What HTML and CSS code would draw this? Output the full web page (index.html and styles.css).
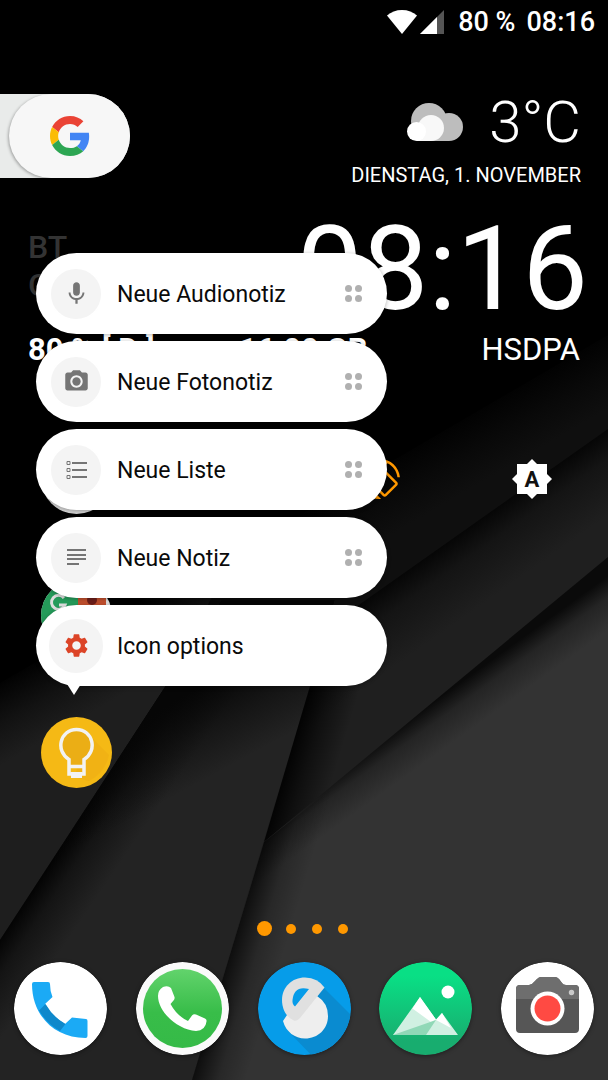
FILE: index.html
```html
<!DOCTYPE html>
<html lang="de">
<head>
  <meta charset="UTF-8">
  <meta name="viewport" content="width=device-width, initial-scale=1">
  <title>Startbildschirm</title>
  <link rel="stylesheet" href="styles.css">
</head>
<body>
  <div class="phone">
    <!-- wallpaper -->
    <svg class="wallpaper" viewBox="0 0 608 1080" preserveAspectRatio="none" aria-hidden="true">
      <defs>
        <linearGradient id="sheet1" gradientUnits="userSpaceOnUse" x1="304" y1="512" x2="336" y2="567">
          <stop offset="0" stop-color="#020202"/><stop offset="0.5" stop-color="#090909"/><stop offset="1" stop-color="#0f0f0f"/>
        </linearGradient>
        <linearGradient id="sheet2" gradientUnits="userSpaceOnUse" x1="486" y1="515" x2="527" y2="573">
          <stop offset="0" stop-color="#060606"/><stop offset="0.35" stop-color="#141414"/><stop offset="1" stop-color="#1f1f1f"/>
        </linearGradient>
        <linearGradient id="left1" gradientUnits="userSpaceOnUse" x1="50" y1="654" x2="86" y2="716">
          <stop offset="0" stop-color="#020202"/><stop offset="0.5" stop-color="#121212"/><stop offset="1" stop-color="#1e1e1e"/>
        </linearGradient>
        <linearGradient id="left2" gradientUnits="userSpaceOnUse" x1="82" y1="812" x2="132" y2="846">
          <stop offset="0" stop-color="#010101"/><stop offset="0.4" stop-color="#141414"/><stop offset="1" stop-color="#232323"/>
        </linearGradient>
        <linearGradient id="left2top" gradientUnits="userSpaceOnUse" x1="250" y1="660" x2="290" y2="734">
          <stop offset="0" stop-color="#060606"/><stop offset="0.5" stop-color="#080808" stop-opacity="0.5"/><stop offset="1" stop-color="#080808" stop-opacity="0"/>
        </linearGradient>
        <linearGradient id="edge" gradientUnits="userSpaceOnUse" x1="284" y1="775" x2="330" y2="789">
          <stop offset="0" stop-color="#000" stop-opacity="0.9"/><stop offset="0.4" stop-color="#000" stop-opacity="0.5"/><stop offset="1" stop-color="#000" stop-opacity="0"/>
        </linearGradient>
        <linearGradient id="edge2" gradientUnits="userSpaceOnUse" x1="235" y1="935" x2="285" y2="950">
          <stop offset="0" stop-color="#000" stop-opacity="0.75"/><stop offset="0.5" stop-color="#000" stop-opacity="0.22"/><stop offset="1" stop-color="#000" stop-opacity="0"/>
        </linearGradient>
        <linearGradient id="sheet3" gradientUnits="userSpaceOnUse" x1="436" y1="700" x2="462" y2="736">
          <stop offset="0" stop-color="#0a0a0a"/><stop offset="0.4" stop-color="#242424"/><stop offset="1" stop-color="#333"/>
        </linearGradient>
      </defs>
      <rect width="608" height="1080" fill="#000"/>
      <path d="M608 335 0 690V1080H608z" fill="url(#sheet1)"/>
      <path d="M608 429 200 717V1080H608z" fill="url(#sheet2)"/>
      <path d="M0 683 240 543 165 687 0 940z" fill="url(#left1)"/>
      <path d="M222 600 165 687 0 940V1080H192L310 686 335 600z" fill="url(#left2)"/>
      <path d="M222 600 165 687 0 940H236L310 686 335 600z" fill="url(#left2top)"/>
      <path d="M310 686 264 842 450 690 440 640 324 640z" fill="url(#edge)"/>
      <path d="M608 557 264 842 192 1080H608z" fill="url(#sheet3)"/>
      <path d="M264 842 192 1080H330V790z" fill="url(#edge2)"/>
    </svg>

    <header class="status-bar">
      <svg class="wifi" viewBox="0 0 30 24"><path d="M15 24 0 5.500C4 2 9 0 15 0s11 2 15 5.500z" fill="#fff"/></svg>
      <svg class="signal" viewBox="0 0 24 24"><path d="M0 24 24 0v24z" fill="#555"/><path d="M0 24 17 7v17z" fill="#fff"/></svg>
      <span class="battery">80 %</span>
      <span>08:16</span>
    </header>

    <div class="top-row">
      <button class="search-pill" aria-label="Google Suche">
        <span class="pill-front">
          <svg viewBox="0 0 48 48">
            <path fill="#ea4335" d="M24 9.500c3.540 0 6.710 1.220 9.210 3.600l6.850-6.850C35.900 2.380 30.470 0 24 0 14.620 0 6.510 5.380 2.560 13.220l7.980 6.190C12.430 13.720 17.740 9.500 24 9.500z"/>
            <path fill="#4285f4" d="M46.980 24.550c0-1.570-.15-3.090-.38-4.550H24v9.020h12.940c-.58 2.960-2.260 5.480-4.780 7.180l7.730 6c4.510-4.180 7.090-10.360 7.090-17.650z"/>
            <path fill="#fbbc05" d="M10.530 28.590c-.48-1.450-.76-2.990-.76-4.590s.27-3.140.76-4.590l-7.980-6.190C.92 16.460 0 20.120 0 24s.92 7.540 2.560 10.780z"/>
            <path fill="#2da653" d="M24 48c6.480 0 11.930-2.130 15.890-5.810l-7.730-6c-2.150 1.450-4.920 2.300-8.160 2.300-6.260 0-11.570-4.220-13.470-9.910l-7.980 6.190C6.510 42.620 14.620 48 24 48z"/>
          </svg>
        </span>
      </button>
      <div class="weather">
        <div class="temp-line">
          <svg class="cloud" viewBox="0 0 56 38">
            <circle cx="22" cy="18" r="18" fill="#bdbdbd"/>
            <circle cx="42" cy="24" r="14" fill="#bdbdbd"/>
            <path d="M22 30h20v8H22z" fill="#bdbdbd"/>
            <circle cx="24" cy="25" r="13" fill="#f8f8f8"/>
            <path d="M10 30h14v8H10z" fill="#f8f8f8"/>
            <circle cx="9.500" cy="28.500" r="9.500" fill="#fff"/>
          </svg>
          <span class="temp">3°C</span>
        </div>
        <div class="date">DIENSTAG, 1. NOVEMBER</div>
      </div>
    </div>

    <div class="clock-row">
      <div class="toggles"><span>BT</span><span>GPS</span></div>
      <time class="clock">08:16</time>
    </div>
    <div class="info-row">
      <strong>80 % [ D ]</strong>
      <strong class="storage">16.00 GB</strong>
      <span class="network">HSDPA</span>
    </div>

    <main class="app-grid">
      <button class="app" aria-label="App"><svg viewBox="0 0 71 71"><circle cx="35.500" cy="35.500" r="35.500" fill="#d5d5d5"/></svg></button>
      <span></span>
      <button class="app" aria-label="Drehen">
        <svg class="glyph" viewBox="0 0 24 24"><path fill="#ff9800" d="M16.480 2.520c3.270 1.550 5.610 4.720 5.970 8.480h1.500C23.440 4.840 18.290 0 12 0l-.66.03 3.810 3.810 1.330-1.320zm-6.250-.77c-.59-.59-1.540-.59-2.120 0L1.750 8.110c-.59.59-.59 1.540 0 2.120l12.020 12.020c.59.59 1.540.59 2.120 0l6.360-6.360c.59-.59.59-1.540 0-2.120L10.230 1.750zm4.600 19.440L2.810 9.170l6.360-6.360 12.020 12.020-6.360 6.360zm-7.310.29C4.250 19.940 1.910 16.760 1.550 13H.05C.56 19.160 5.710 24 12 24l.66-.03-3.810-3.810-1.330 1.320z"/></svg>
      </button>
      <button class="app" aria-label="Automatische Helligkeit">
        <svg class="glyph" viewBox="0 0 40 40">
          <path d="M5 5h30v30H5zM20 0l20 20-20 20L0 20z" fill="#fff"/>
          <text x="20" y="28" text-anchor="middle" class="auto">A</text>
        </svg>
      </button>

      <button class="app" aria-label="Ordner">
        <svg viewBox="0 0 71 71">
          <clipPath id="folder"><circle cx="35.500" cy="35.500" r="35.500"/></clipPath>
          <g clip-path="url(#folder)">
            <path d="M0 0h71v71H0z" fill="#ddd"/>
            <path d="M0 0h37v71H0z" fill="#259b5a"/>
            <path d="M37 0h28v71H37z" fill="#c1502e"/>
            <circle cx="51" cy="20" r="5" fill="#6d1f1a"/>
            <path d="M23 18a7 7 0 1 0 1 7h-6" fill="none" stroke="#ddd" stroke-width="3"/>
          </g>
        </svg>
      </button>
      <span></span><span></span><span></span>

      <button class="app" aria-label="Notizen">
        <svg viewBox="0 0 71 71">
          <circle cx="35.500" cy="35.500" r="35.500" fill="#f5b915"/>
          <path d="M48 18 68 38q-4 18-20 26L33 60z" fill="#edac14" opacity="0.5"/>
          <path d="M28 50V42.500C14 34 19 12.500 35.500 12.500S57 34 43 42.500V50z" fill="#ebae15"/>
          <path d="M28 57V42.500C14 34 19 12.500 35.500 12.500S57 34 43 42.500V57zM28 49.500h15" fill="none" stroke="#f2f2f2" stroke-width="3.500"/>
          <path d="M30 55h11v6H30z" fill="#f2f2f2"/>
        </svg>
      </button>
    </main>

    <!-- long press menu -->
    <div class="shortcuts" role="menu">
      <button class="shortcut" role="menuitem">
        <span class="icon"><svg viewBox="0 0 24 24"><path d="M12 14c1.660 0 2.990-1.340 2.990-3L15 5c0-1.660-1.340-3-3-3S9 3.340 9 5v6c0 1.660 1.340 3 3 3zm5.300-3c0 3-2.540 5.100-5.300 5.100S6.700 14 6.700 11H5c0 3.410 2.720 6.230 6 6.720V21h2v-3.280c3.280-.48 6-3.300 6-6.720h-1.700z"/></svg></span>
        <span class="label">Neue Audionotiz</span>
        <span class="grip"><i></i><i></i><i></i><i></i></span>
      </button>
      <button class="shortcut" role="menuitem">
        <span class="icon"><svg viewBox="0 0 24 24"><circle cx="12" cy="12" r="3.700"/><path d="M9 2 7.170 4H4c-1.100 0-2 .9-2 2v12c0 1.100.9 2 2 2h16c1.100 0 2-.9 2-2V6c0-1.100-.9-2-2-2h-3.170L15 2H9zm3 15.500c-3.040 0-5.500-2.460-5.500-5.500S8.960 6.500 12 6.500s5.500 2.460 5.500 5.500-2.460 5.500-5.500 5.500z"/></svg></span>
        <span class="label">Neue Fotonotiz</span>
        <span class="grip"><i></i><i></i><i></i><i></i></span>
      </button>
      <button class="shortcut" role="menuitem">
        <span class="icon"><svg viewBox="0 0 27 27"><path d="M9 6h15v2H9zM9 13h15v2H9zM9 20h15v2H9z"/><path d="M4 5.500h3v3H4zM4 12.500h3v3H4zM4 19.500h3v3H4z" fill="none" stroke="#757575"/></svg></span>
        <span class="label">Neue Liste</span>
        <span class="grip"><i></i><i></i><i></i><i></i></span>
      </button>
      <button class="shortcut" role="menuitem">
        <span class="icon"><svg viewBox="0 0 27 27"><path d="M4 5h19v2H4zM4 10h19v2H4zM4 14h19v2H4zM4 19h12v2H4z"/></svg></span>
        <span class="label">Neue Notiz</span>
        <span class="grip"><i></i><i></i><i></i><i></i></span>
      </button>
      <button class="shortcut options" role="menuitem">
        <span class="icon"><svg viewBox="0 0 24 24"><path d="M19.430 12.980c.04-.32.07-.64.07-.98s-.03-.66-.07-.98l2.110-1.650c.19-.15.24-.42.12-.64l-2-3.460c-.12-.22-.39-.3-.61-.22l-2.490 1c-.52-.4-1.080-.73-1.690-.98l-.38-2.650C14.460 2.180 14.250 2 14 2h-4c-.25 0-.46.18-.49.42l-.38 2.650c-.61.25-1.170.59-1.690.98l-2.490-1c-.23-.09-.49 0-.61.22l-2 3.460c-.13.22-.07.49.12.64l2.110 1.650c-.04.32-.07.65-.07.98s.03.66.07.98l-2.110 1.650c-.19.15-.24.42-.12.64l2 3.460c.12.22.39.3.61.22l2.490-1c.52.4 1.080.73 1.690.98l.38 2.650c.03.24.24.42.49.42h4c.25 0 .46-.18.49-.42l.38-2.650c.61-.25 1.170-.59 1.690-.98l2.490 1c.23.09.49 0 .61-.22l2-3.460c.12-.22.07-.49-.12-.64l-2.110-1.650zM12 15.800c-2.100 0-3.800-1.700-3.800-3.800s1.700-3.800 3.800-3.800 3.800 1.700 3.800 3.800-1.700 3.800-3.800 3.800z"/></svg></span>
        <span class="label">Icon options</span>
      </button>
    </div>

    <div class="page-dots"><i class="active"></i><i></i><i></i><i></i></div>

    <nav class="dock">
      <button aria-label="Telefon">
        <svg viewBox="0 0 93 93">
          <circle cx="46.500" cy="46.500" r="46.500" fill="#fff"/>
          <path d="M20 20h14q2 0 2 2 0 7 2.500 13L31 42Q38 55 51 62L58 55.500 72 57q1.500 0 1.500 2V74q0 2-2 2C40 76 18 53 18 22q0-2 2-2z" fill="#1baaf5"/>
          <path d="M31.500 42 25 48.500Q33 62 46 69L51.500 62Q39 55 31.500 42z" fill="#0f88cb"/>
        </svg>
      </button>
      <button aria-label="WhatsApp">
        <svg viewBox="0 0 93 93">
          <linearGradient id="wa" x2="0" y2="1"><stop stop-color="#62d36c"/><stop offset="0.550" stop-color="#38bd49"/><stop offset="1" stop-color="#35ba47"/></linearGradient>
          <circle cx="46.500" cy="46.500" r="46.500" fill="#fafafa"/>
          <circle cx="46.500" cy="46.500" r="39.500" fill="url(#wa)"/>
          <path d="M27 25q5-2 8 1l3.500 9q.5 2-1 3.500L34.500 42Q41 54 52 59l4-5.500q1.500-2 4-1l9 4q2 1 1.500 3-1 9-10.500 9.500C42 68 22 50 22 34q0-6 5-9z" fill="#fff"/>
        </svg>
      </button>
      <button aria-label="Dateimanager">
        <svg viewBox="0 0 93 93">
          <clipPath id="disc"><circle cx="46.500" cy="46.500" r="46.500"/></clipPath>
          <circle cx="46.500" cy="46.500" r="46.500" fill="#069ce9"/>
          <path clip-path="url(#disc)" d="M66 26 100 60v40H60L30 69z" fill="#0a8bd0"/>
          <path d="M29 53 25 59C28 70 37 76.500 47 76.500 60 76.500 70 67 70 54Q70 41 59 34L38 50z" fill="#eee"/>
          <path d="M66.500 25.500 42 56Q39 59.500 36 58.500C28 55 24 47 24 38 24 25 34 15.500 47 15.500Q60 16 66.500 25.500z" fill="#e0e0e0"/>
          <path d="M51 27Q36 23 34.500 38 34 42 37 44.500z" fill="#069ce9"/>
        </svg>
      </button>
      <button aria-label="Galerie">
        <svg viewBox="0 0 93 93">
          <linearGradient id="gal" x2="0" y2="1"><stop offset="0.150" stop-color="#09df85"/><stop offset="0.850" stop-color="#18ad6f"/></linearGradient>
          <circle cx="46.500" cy="46.500" r="46.500" fill="url(#gal)"/>
          <circle cx="69" cy="30" r="6.500" fill="#fff"/>
          <path d="M14 73 41 35 57 57.500 63 51 79 73z" fill="#d0f0e2"/>
          <path d="M41 35 33.500 46.500 52 60 57 57.500zM63 51 57 58 72 66z" fill="#fff"/>
          <path d="M14 73 57 58 47 73z" fill="#90d8b7"/>
        </svg>
      </button>
      <button aria-label="Kamera">
        <svg viewBox="0 0 93 93">
          <circle cx="46.500" cy="46.500" r="46.500" fill="#fff"/>
          <path d="M19 23h9q3 0 5-3l3-3q2-2 4-2h14q2 0 4 2l3 4q1 2 4 2h9q4 0 4 4v40q0 4-4 4H19q-4 0-4-4V27q0-4 4-4z" fill="#565656"/>
          <path d="M15 37V27q0-4 4-4h9q3 0 5-3l3-3q2-2 4-2h14q2 0 4 2l3 4q1 2 4 2h9q4 0 4 4v10z" fill="#6e6e6e"/>
          <circle cx="46.500" cy="46.500" r="17" fill="#fff"/>
          <circle cx="46.500" cy="46.500" r="13" fill="#ff4a43"/>
          <circle cx="70.500" cy="30.500" r="2.700" fill="#c9c9c9"/>
        </svg>
      </button>
    </nav>
  </div>
</body>
</html>
```

FILE: styles.css
```css
* {
  box-sizing: border-box;
}

body {
  margin: 0;
  background: #000;
  color: #fff;
  font-family: Roboto, "Liberation Sans", sans-serif;
}

button {
  border: 0;
  padding: 0;
  background: none;
  color: inherit;
  font: inherit;
  cursor: pointer;
}

svg {
  display: block;
}

.phone {
  position: relative;
  min-height: 100vh;
  display: flex;
  flex-direction: column;
}

.wallpaper {
  position: absolute;
  top: 0;
  left: 0;
  width: 100%;
  height: 100%;
  z-index: -1;
}

/* status bar */
.status-bar {
  height: 42px;
  padding: 1px 13px 0 0;
  display: flex;
  justify-content: flex-end;
  align-items: center;
  font-size: 27px;
  font-weight: 500;
}

.wifi {
  width: 30px;
  height: 24px;
}

.signal {
  width: 24px;
  height: 24px;
  margin: 0 14px 0 3px;
}

.battery {
  margin-right: 11px;
}

/* search + weather */
.top-row {
  display: flex;
  justify-content: space-between;
  padding: 52px 27px 0 0;
}

.search-pill {
  width: 130px;
  height: 84px;
  padding-left: 9px;
  background: #e9ebea;
  border-radius: 0 42px 42px 0;
}

.pill-front {
  display: flex;
  align-items: center;
  justify-content: center;
  height: 84px;
  border-radius: 42px;
  background: #f7f7f7;
  box-shadow: -1px 1px 3px rgba(0,0,0,0.3);
}

.pill-front svg {
  width: 40px;
  height: 40px;
}

.weather {
  display: flex;
  flex-direction: column;
  align-items: flex-end;
}

.temp-line {
  display: flex;
  align-items: center;
  gap: 26px;
  height: 56px;
}

.cloud {
  width: 56px;
  height: 38px;
}

.temp {
  font-size: 58px;
  font-weight: 300;
}

.date {
  margin-top: 13px;
  font-size: 20px;
  line-height: 24px;
}

/* clock */
.clock-row {
  display: flex;
  justify-content: space-between;
  height: 142px;
  padding: 26px 20px 0 28px;
}

.toggles {
  display: flex;
  flex-direction: column;
  padding-top: 15px;
  color: #333;
  font-size: 32px;
  font-weight: 500;
  line-height: 38px;
}

.clock {
  font-size: 117px;
  line-height: 112px;
}

.info-row {
  display: flex;
  align-items: center;
  padding: 0 28px;
  height: 42px;
  font-size: 31px;
  line-height: 36px;
}

.storage {
  margin-left: auto;
  margin-right: 114px;
}

/* home screen apps */
.app-grid {
  display: grid;
  grid-template-columns: repeat(4, 1fr);
  grid-auto-rows: 137px;
  margin-top: 39px;
}

.app {
  display: flex;
  align-items: center;
  justify-content: center;
}

.app svg {
  width: 71px;
  height: 71px;
}

.app .glyph {
  width: 40px;
  height: 40px;
}

.auto {
  font-size: 22px;
  font-weight: 700;
  fill: #111;
}

/* shortcut menu */
.shortcuts {
  position: absolute;
  top: 253px;
  left: 36px;
  width: 351px;
  display: flex;
  flex-direction: column;
  gap: 7px;
}

.shortcut {
  position: relative;
  display: flex;
  align-items: center;
  height: 81px;
  padding: 0 25px 0 13px;
  border-radius: 41px;
  background: #fff;
  color: #0a0a0a;
  font-size: 23px;
  box-shadow: 0 1px 4px rgba(0,0,0,0.3);
}

.icon {
  display: flex;
  align-items: center;
  justify-content: center;
  width: 54px;
  height: 54px;
  border: 2px solid #fff;
  border-radius: 50%;
  background: #f4f4f4;
}

.icon svg {
  width: 27px;
  height: 27px;
  fill: #757575;
}

.label {
  margin-left: 14px;
  padding-top: 2px;
}

.grip {
  display: grid;
  grid-template-columns: 7px 7px;
  gap: 3px;
  margin-left: auto;
}

.grip i {
  height: 7px;
  border-radius: 50%;
  background: #b0b0b0;
}

.options .icon {
  border-color: #f4f4f4;
}

.options svg {
  fill: #dc4427;
}

/* arrow to the pressed icon */
.options::after {
  content: "";
  position: absolute;
  left: 31px;
  bottom: -9px;
  border: 7px solid transparent;
  border-top: 11px solid #fff;
  border-bottom: 0;
}

/* bottom */
.page-dots {
  display: flex;
  align-items: center;
  justify-content: center;
  gap: 16px;
  margin-top: auto;
  margin-bottom: 26px;
  padding-right: 3px;
}

.page-dots i {
  width: 10px;
  height: 10px;
  border-radius: 50%;
  background: #ff9800;
}

.page-dots .active {
  width: 15px;
  height: 15px;
  margin-right: -2px;
}

.dock {
  display: flex;
  justify-content: space-between;
  padding: 0 14px 25px;
}

.dock svg {
  width: 93px;
  height: 93px;
  border-radius: 50%;
  box-shadow: 0 1px 4px rgba(0,0,0,0.4);
}
```
